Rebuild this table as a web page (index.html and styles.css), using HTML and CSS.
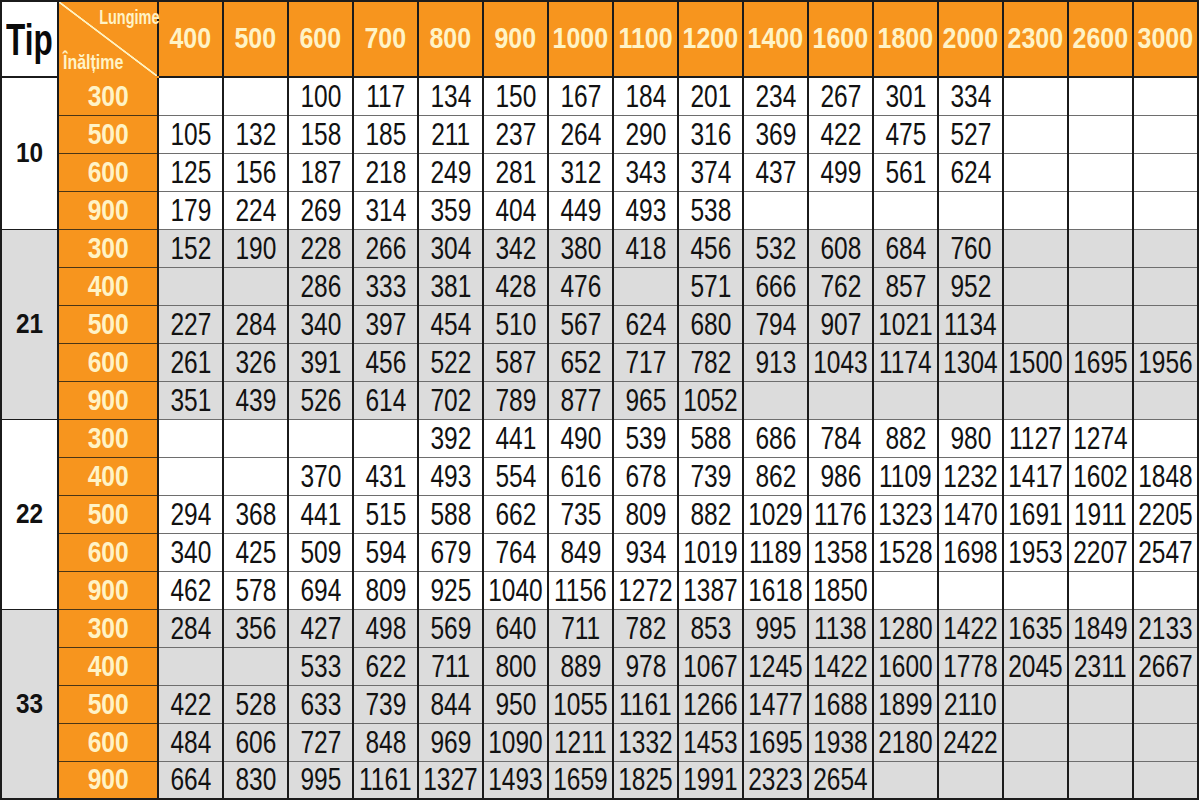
FILE: index.html
```html
<!DOCTYPE html>
<html lang="ro">
<head>
<meta charset="utf-8">
<title>Tabel radiatoare</title>
<link rel="stylesheet" href="styles.css">
</head>
<body>
<table class="grid">
<colgroup>
<col class="c-tip"><col class="c-h">
<col class="c-n"><col class="c-n"><col class="c-n"><col class="c-n"><col class="c-n"><col class="c-n"><col class="c-n"><col class="c-n"><col class="c-n"><col class="c-n"><col class="c-n"><col class="c-n"><col class="c-n"><col class="c-n"><col class="c-n"><col class="c-n">
</colgroup>
<thead>
<tr class="head">
<th class="tiph"><span>Tip</span></th>
<th class="corner"><div class="corner-in"><span class="lung">Lungime</span><span class="inalt">Înălțime</span></div></th>
<th><span>400</span></th><th><span>500</span></th><th><span>600</span></th><th><span>700</span></th><th><span>800</span></th><th><span>900</span></th><th><span>1000</span></th><th><span>1100</span></th><th><span>1200</span></th><th><span>1400</span></th><th><span>1600</span></th><th><span>1800</span></th><th><span>2000</span></th><th><span>2300</span></th><th><span>2600</span></th><th><span>3000</span></th>
</tr>
</thead>
<tbody class="grp">
<tr><td class="tip" rowspan="4"><span>10</span></td><td class="h top"><span>300</span></td><td></td><td></td><td><span>100</span></td><td><span>117</span></td><td><span>134</span></td><td><span>150</span></td><td><span>167</span></td><td><span>184</span></td><td><span>201</span></td><td><span>234</span></td><td><span>267</span></td><td><span>301</span></td><td><span>334</span></td><td></td><td></td><td></td></tr>
<tr><td class="h"><span>500</span></td><td><span>105</span></td><td><span>132</span></td><td><span>158</span></td><td><span>185</span></td><td><span>211</span></td><td><span>237</span></td><td><span>264</span></td><td><span>290</span></td><td><span>316</span></td><td><span>369</span></td><td><span>422</span></td><td><span>475</span></td><td><span>527</span></td><td></td><td></td><td></td></tr>
<tr><td class="h"><span>600</span></td><td><span>125</span></td><td><span>156</span></td><td><span>187</span></td><td><span>218</span></td><td><span>249</span></td><td><span>281</span></td><td><span>312</span></td><td><span>343</span></td><td><span>374</span></td><td><span>437</span></td><td><span>499</span></td><td><span>561</span></td><td><span>624</span></td><td></td><td></td><td></td></tr>
<tr><td class="h"><span>900</span></td><td><span>179</span></td><td><span>224</span></td><td><span>269</span></td><td><span>314</span></td><td><span>359</span></td><td><span>404</span></td><td><span>449</span></td><td><span>493</span></td><td><span>538</span></td><td></td><td></td><td></td><td></td><td></td><td></td><td></td></tr>
</tbody>
<tbody class="grp gray">
<tr><td class="tip" rowspan="5"><span>21</span></td><td class="h"><span>300</span></td><td><span>152</span></td><td><span>190</span></td><td><span>228</span></td><td><span>266</span></td><td><span>304</span></td><td><span>342</span></td><td><span>380</span></td><td><span>418</span></td><td><span>456</span></td><td><span>532</span></td><td><span>608</span></td><td><span>684</span></td><td><span>760</span></td><td></td><td></td><td></td></tr>
<tr><td class="h"><span>400</span></td><td></td><td></td><td><span>286</span></td><td><span>333</span></td><td><span>381</span></td><td><span>428</span></td><td><span>476</span></td><td></td><td><span>571</span></td><td><span>666</span></td><td><span>762</span></td><td><span>857</span></td><td><span>952</span></td><td></td><td></td><td></td></tr>
<tr><td class="h"><span>500</span></td><td><span>227</span></td><td><span>284</span></td><td><span>340</span></td><td><span>397</span></td><td><span>454</span></td><td><span>510</span></td><td><span>567</span></td><td><span>624</span></td><td><span>680</span></td><td><span>794</span></td><td><span>907</span></td><td><span>1021</span></td><td><span>1134</span></td><td></td><td></td><td></td></tr>
<tr><td class="h"><span>600</span></td><td><span>261</span></td><td><span>326</span></td><td><span>391</span></td><td><span>456</span></td><td><span>522</span></td><td><span>587</span></td><td><span>652</span></td><td><span>717</span></td><td><span>782</span></td><td><span>913</span></td><td><span>1043</span></td><td><span>1174</span></td><td><span>1304</span></td><td><span>1500</span></td><td><span>1695</span></td><td><span>1956</span></td></tr>
<tr><td class="h"><span>900</span></td><td><span>351</span></td><td><span>439</span></td><td><span>526</span></td><td><span>614</span></td><td><span>702</span></td><td><span>789</span></td><td><span>877</span></td><td><span>965</span></td><td><span>1052</span></td><td></td><td></td><td></td><td></td><td></td><td></td><td></td></tr>
</tbody>
<tbody class="grp">
<tr><td class="tip" rowspan="5"><span>22</span></td><td class="h"><span>300</span></td><td></td><td></td><td></td><td></td><td><span>392</span></td><td><span>441</span></td><td><span>490</span></td><td><span>539</span></td><td><span>588</span></td><td><span>686</span></td><td><span>784</span></td><td><span>882</span></td><td><span>980</span></td><td><span>1127</span></td><td><span>1274</span></td><td></td></tr>
<tr><td class="h"><span>400</span></td><td></td><td></td><td><span>370</span></td><td><span>431</span></td><td><span>493</span></td><td><span>554</span></td><td><span>616</span></td><td><span>678</span></td><td><span>739</span></td><td><span>862</span></td><td><span>986</span></td><td><span>1109</span></td><td><span>1232</span></td><td><span>1417</span></td><td><span>1602</span></td><td><span>1848</span></td></tr>
<tr><td class="h"><span>500</span></td><td><span>294</span></td><td><span>368</span></td><td><span>441</span></td><td><span>515</span></td><td><span>588</span></td><td><span>662</span></td><td><span>735</span></td><td><span>809</span></td><td><span>882</span></td><td><span>1029</span></td><td><span>1176</span></td><td><span>1323</span></td><td><span>1470</span></td><td><span>1691</span></td><td><span>1911</span></td><td><span>2205</span></td></tr>
<tr><td class="h"><span>600</span></td><td><span>340</span></td><td><span>425</span></td><td><span>509</span></td><td><span>594</span></td><td><span>679</span></td><td><span>764</span></td><td><span>849</span></td><td><span>934</span></td><td><span>1019</span></td><td><span>1189</span></td><td><span>1358</span></td><td><span>1528</span></td><td><span>1698</span></td><td><span>1953</span></td><td><span>2207</span></td><td><span>2547</span></td></tr>
<tr><td class="h"><span>900</span></td><td><span>462</span></td><td><span>578</span></td><td><span>694</span></td><td><span>809</span></td><td><span>925</span></td><td><span>1040</span></td><td><span>1156</span></td><td><span>1272</span></td><td><span>1387</span></td><td><span>1618</span></td><td><span>1850</span></td><td></td><td></td><td></td><td></td><td></td></tr>
</tbody>
<tbody class="grp gray">
<tr><td class="tip" rowspan="5"><span>33</span></td><td class="h"><span>300</span></td><td><span>284</span></td><td><span>356</span></td><td><span>427</span></td><td><span>498</span></td><td><span>569</span></td><td><span>640</span></td><td><span>711</span></td><td><span>782</span></td><td><span>853</span></td><td><span>995</span></td><td><span>1138</span></td><td><span>1280</span></td><td><span>1422</span></td><td><span>1635</span></td><td><span>1849</span></td><td><span>2133</span></td></tr>
<tr><td class="h"><span>400</span></td><td></td><td></td><td><span>533</span></td><td><span>622</span></td><td><span>711</span></td><td><span>800</span></td><td><span>889</span></td><td><span>978</span></td><td><span>1067</span></td><td><span>1245</span></td><td><span>1422</span></td><td><span>1600</span></td><td><span>1778</span></td><td><span>2045</span></td><td><span>2311</span></td><td><span>2667</span></td></tr>
<tr><td class="h"><span>500</span></td><td><span>422</span></td><td><span>528</span></td><td><span>633</span></td><td><span>739</span></td><td><span>844</span></td><td><span>950</span></td><td><span>1055</span></td><td><span>1161</span></td><td><span>1266</span></td><td><span>1477</span></td><td><span>1688</span></td><td><span>1899</span></td><td><span>2110</span></td><td></td><td></td><td></td></tr>
<tr><td class="h"><span>600</span></td><td><span>484</span></td><td><span>606</span></td><td><span>727</span></td><td><span>848</span></td><td><span>969</span></td><td><span>1090</span></td><td><span>1211</span></td><td><span>1332</span></td><td><span>1453</span></td><td><span>1695</span></td><td><span>1938</span></td><td><span>2180</span></td><td><span>2422</span></td><td></td><td></td><td></td></tr>
<tr><td class="h"><span>900</span></td><td><span>664</span></td><td><span>830</span></td><td><span>995</span></td><td><span>1161</span></td><td><span>1327</span></td><td><span>1493</span></td><td><span>1659</span></td><td><span>1825</span></td><td><span>1991</span></td><td><span>2323</span></td><td><span>2654</span></td><td></td><td></td><td></td><td></td><td></td></tr>
</tbody>
</table>
</body>
</html>
```
FILE: styles.css
```css
* { box-sizing: border-box; }
html, body { margin: 0; padding: 0; background: #ffffff; }

.grid {
  border-collapse: collapse;
  table-layout: fixed;
  width: 1198px;
  font-family: "Liberation Sans", Arial, sans-serif;
  color: #111;
  border-bottom: 2px solid #1b1b1b;
}

.c-tip { width: 57px; }
.c-h { width: 100px; }
.c-n { width: 65px; }

.grid th, .grid td {
  padding: 0;
  text-align: center;
  vertical-align: middle;
  border-top: 1px solid #6e6e6e;
  border-bottom: 1px solid #6e6e6e;
  border-left: 2px solid #1b1b1b;
  border-right: 2px solid #1b1b1b;
  white-space: nowrap;
  line-height: 1;
}

/* condensed look: scale each value horizontally, keep layout box narrow */
.grid td > span,
.grid th > span {
  display: inline-block;
  transform: scaleX(0.79);
  margin: 0 -13px;
}

.head { height: 76px; }
.head th {
  background: #f7951e;
  color: #fff3c6;
  font-weight: 700;
  font-size: 29px;
  border-top: 2px solid #1b1b1b;
  border-bottom: 2px solid #1b1b1b;
  padding-bottom: 2px;
}
.head th > span { transform: scaleX(0.86); }

.head .tiph {
  background: #ffffff;
  color: #0a0a0a;
  font-size: 45px;
  padding: 0;
}
.head .tiph > span { transform: scaleX(0.7); margin: 0 -14px; }

.head .corner {
  padding: 0;
  border-bottom: 2px solid #f7951e;
  background:
    linear-gradient(to top right,
      #f7951e calc(50% - 1.2px),
      #fff1c0 calc(50% - 0.6px),
      #fff1c0 calc(50% + 0.6px),
      #f7951e calc(50% + 1.2px));
}

.corner-in {
  display: flex;
  flex-direction: column;
  justify-content: space-between;
  height: 74px;
  padding: 4px 0 3px 0;
  font-size: 21px;
  line-height: 22px;
}
.lung {
  align-self: flex-end;
  transform: scaleX(0.69);
  transform-origin: right center;
  margin-right: -2px;
}
.inalt {
  align-self: flex-start;
  transform: scaleX(0.76);
  transform-origin: left center;
  margin-left: 4px;
}

tbody tr { height: 38px; }
tbody td { font-size: 31px; font-weight: 400; padding-top: 1px; }

.gray td { background: #dcdcdc; }

.grid td.tip {
  font-weight: 700;
  font-size: 28px;
  background: #ffffff;
  border-top: 1px solid #1b1b1b;
  border-bottom: 1px solid #1b1b1b;
}
.grid td.tip > span { transform: scaleX(0.87); }
.gray td.tip { background: #dcdcdc; }

.grid td.h {
  background: #f7951e;
  color: #fff3c6;
  font-weight: 700;
  font-size: 29px;
  border-top: 1px solid #4a3516;
  border-bottom: 1px solid #4a3516;
}
.grid td.h > span { transform: scaleX(0.85); }
.grid td.h.top { border-top: 2px solid #f7951e; }

.grp { border-top: 1px solid #1b1b1b; }
```
